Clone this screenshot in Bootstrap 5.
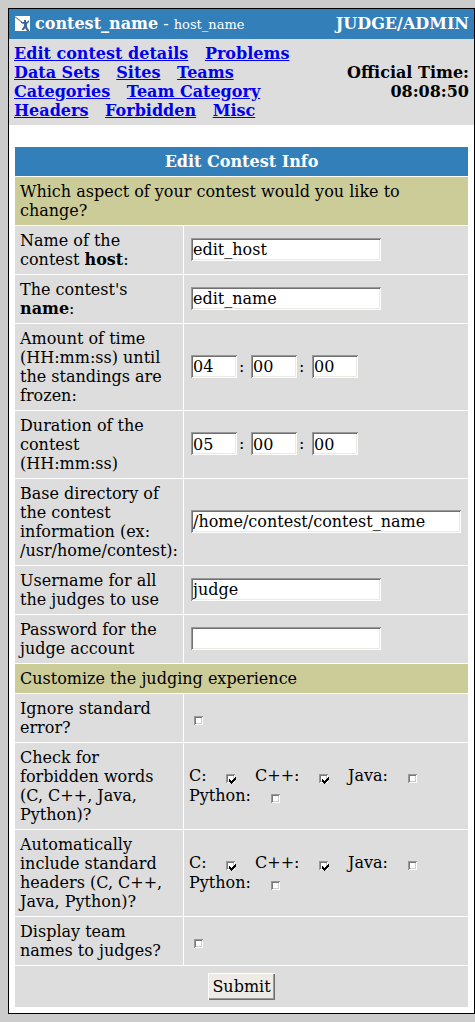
<!DOCTYPE html>
<html lang="en">
<head>
<meta charset="utf-8">
<meta name="viewport" content="width=device-width, initial-scale=1">
<title>Edit Contest Info</title>
<link href="https://cdn.jsdelivr.net/npm/bootstrap@5.3.0/dist/css/bootstrap.min.css" rel="stylesheet">
<style>
body{background:#ccc;color:#000;font:16px/19px "DejaVu Serif",serif;padding:8px 0 8px 8px}
.frame{width:467px;height:1006px;border:1px solid #000;background:#fff}
.topbar{height:30px;background:#337fba;color:#fff;padding:0 5px 1px 6px}
.logo{margin-top:-1px}
.host{font-size:13px}
.menu{height:86px;background:#ddd;padding:5px 5px 5px 5px}
.menu a{color:#00e;margin-right:11px;white-space:nowrap}
.menu nav{width:300px}
.sheet{margin:22px 6px 0;display:grid;grid-template-columns:168px 284px;gap:1px}
.sheet>div{background:#ddd;padding:5px}
.sheet>.wide{grid-column:1/3}
.sheet>.title{background:#337fba;color:#fff}
.sheet>.section{background:#cc9}
.sheet>.lbl{white-space:nowrap}
.sheet>.entry{padding-top:4px;padding-bottom:6px}
.field{width:190px;height:23px;border:0;border-radius:0;padding:1px 2px 0;color:#000;font:inherit;line-height:20px;background:#fff;margin-left:2px;box-shadow:inset 1px 1px #999,inset -1px -1px #fff,inset 2px 2px #707070,inset -2px -2px #ece9e4}
.field.two{width:46px}
.field.long{width:270px}
.colon{width:12px;padding-left:2px}
.colon.last{width:13px}
.langs{column-gap:20px;line-height:20px}
.tick{width:11px;height:12px;flex:none;margin-right:-2px;position:relative;top:4px}
.solo{margin-left:5px}
.submit{width:67px;height:27px;padding:0;border:0;background:#eeebe7;color:#000;font:inherit;box-shadow:inset 1px 1px #fff,inset -1px -1px #707070,inset -2px -2px #999}
</style>
</head>
<body>
<svg width="0" height="0" class="d-none">
<symbol id="off" viewBox="0 0 11 12" shape-rendering="crispEdges"><path fill="#fff" d="M0 0h9v9H0z"/><path fill="#999" d="M0 0h9v1H1v8H0z"/><path fill="#777" d="M1 1h7v1H2v6H1z"/><path fill="#ccc" d="M7 2h1v6H2V7h5z"/></symbol>
<symbol id="on" viewBox="0 0 11 12" shape-rendering="crispEdges"><use href="#off" width="11" height="12"/><path d="M3 5h1v1h1v1h1V6h1V5h1V4h1V3h1v3H9v1H8v1H7v1H6v1H5V9H4V8H3z"/></symbol>
</svg>
<main class="frame">
<header class="topbar d-flex align-items-center justify-content-between">
<div class="d-flex align-items-center"><svg class="logo" width="15" height="15" viewBox="0 0 15 15"><path fill="#fff" d="M0 0h15v15H0z"/><path d="M0 .8 8 7" stroke="#888" stroke-width="1.1"/><path fill="#3d6997" d="M9 4h2v2h1l2-2v2l-2 2v3l2 3v1h-2l-2-3-1 2H7v-1l2-3V8L6 7V6h3z"/></svg><span style="margin-left:5px;padding-top:1px"><b>contest_name</b> - <span class="host">host_name</span></span></div>
<b>JUDGE/ADMIN</b>
</header>
<div class="menu d-flex justify-content-between align-items-center fw-bold">
<nav><a href="#">Edit contest details</a> <a href="#">Problems</a><br><a href="#">Data Sets</a> <a href="#">Sites</a> <a href="#">Teams</a><br><a href="#">Categories</a> <a href="#">Team Category</a><br><a href="#">Headers</a> <a href="#">Forbidden</a> <a href="#">Misc</a></nav>
<div class="text-end text-nowrap">Official Time:<br>08:08:50</div>
</div>
<form class="sheet">
<div class="wide title text-center fw-bold">Edit Contest Info</div>
<div class="wide section">Which aspect of your contest would you like to<br>change?</div>
<div class="lbl">Name of the<br>contest <b>host</b>:</div><div class="entry d-flex align-items-center"><input class="field" value="edit_host"></div>
<div class="lbl">The contest's<br><b>name</b>:</div><div class="entry d-flex align-items-center"><input class="field" value="edit_name"></div>
<div class="lbl">Amount of time<br>(HH:mm:ss) until<br>the standings are<br>frozen:</div><div class="entry d-flex align-items-center"><input class="field two" value="04"><span class="colon">:</span><input class="field two" value="00"><span class="colon last">:</span><input class="field two" value="00"></div>
<div class="lbl">Duration of the<br>contest<br>(HH:mm:ss)</div><div class="entry d-flex align-items-center"><input class="field two" value="05"><span class="colon">:</span><input class="field two" value="00"><span class="colon last">:</span><input class="field two" value="00"></div>
<div class="lbl">Base directory of<br>the contest<br>information (ex:<br>/usr/home/contest):</div><div class="entry d-flex align-items-center"><input class="field long" value="/home/contest/contest_name"></div>
<div class="lbl">Username for all<br>the judges to use</div><div class="entry d-flex align-items-center"><input class="field" value="judge"></div>
<div class="lbl">Password for the<br>judge account</div><div class="entry d-flex align-items-center"><input class="field" type="password"></div>
<div class="wide section">Customize the judging experience</div>
<div class="lbl">Ignore standard<br>error?</div><div class="d-flex align-items-center"><svg class="tick solo"><use href="#off"/></svg></div>
<div class="lbl">Check for<br>forbidden words<br>(C, C++, Java,<br>Python)?</div>
<div class="d-flex flex-wrap align-content-center langs">
<label class="d-flex align-items-center justify-content-between" style="width:46px">C:<svg class="tick"><use href="#on"/></svg></label><label class="d-flex align-items-center justify-content-between" style="width:73px">C++:<svg class="tick"><use href="#on"/></svg></label><label class="d-flex align-items-center justify-content-between" style="width:69px">Java:<svg class="tick"><use href="#off"/></svg></label><label class="d-flex align-items-center justify-content-between" style="width:91px">Python:<svg class="tick"><use href="#off"/></svg></label></div>
<div class="lbl">Automatically<br>include standard<br>headers (C, C++,<br>Java, Python)?</div>
<div class="d-flex flex-wrap align-content-center langs">
<label class="d-flex align-items-center justify-content-between" style="width:46px">C:<svg class="tick"><use href="#on"/></svg></label><label class="d-flex align-items-center justify-content-between" style="width:73px">C++:<svg class="tick"><use href="#on"/></svg></label><label class="d-flex align-items-center justify-content-between" style="width:69px">Java:<svg class="tick"><use href="#off"/></svg></label><label class="d-flex align-items-center justify-content-between" style="width:91px">Python:<svg class="tick"><use href="#off"/></svg></label></div>
<div class="lbl">Display team<br>names to judges?</div><div class="d-flex align-items-center"><svg class="tick solo"><use href="#off"/></svg></div>
<div class="wide text-center" style="height:41px;padding-top:7px"><button type="button" class="submit">Submit</button></div>
</form>
</main>
<script src="https://cdn.jsdelivr.net/npm/bootstrap@5.3.0/dist/js/bootstrap.bundle.min.js"></script>
</body>
</html>
